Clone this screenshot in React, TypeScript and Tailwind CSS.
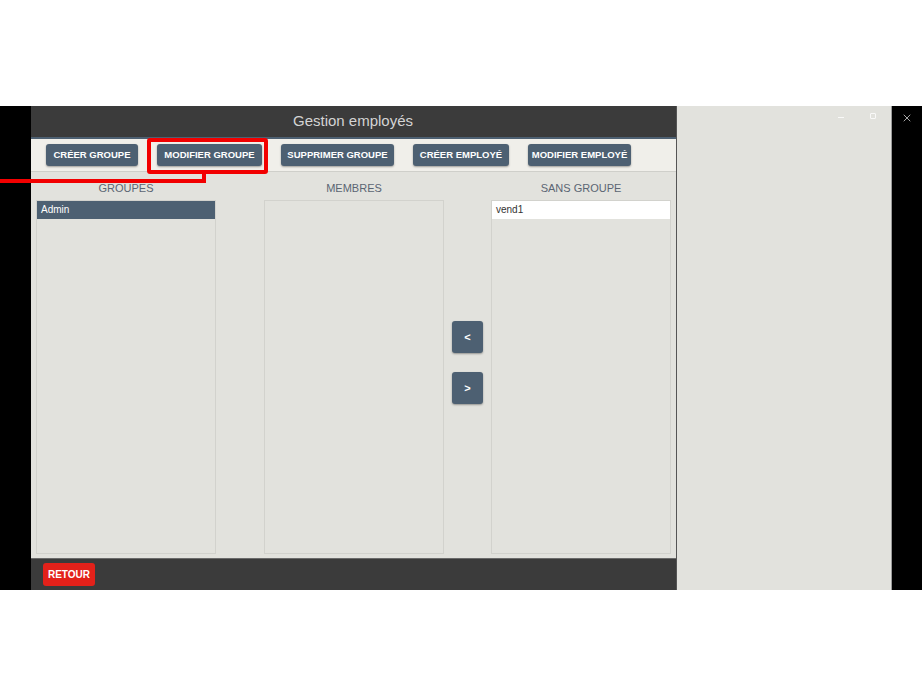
import { X } from "lucide-react";

const actions = [
  { label: "CRÉER GROUPE", w: "w-[92px]" },
  { label: "MODIFIER GROUPE", w: "w-[105px]" },
  { label: "SUPPRIMER GROUPE", w: "w-[113px]" },
  { label: "CRÉER EMPLOYÉ", w: "w-[96px]" },
  { label: "MODIFIER EMPLOYÉ", w: "w-[103px]" },
];

function ListBox({ title, children }: { title: string; children?: React.ReactNode }) {
  return (
    <div className="flex flex-col">
      <div className="h-[14px] mb-[5px] text-center text-[11px] leading-[14px] text-[#5b6573]">{title}</div>
      <div className="flex-1 border border-[#d2d2cd] bg-[#e2e2dd]">{children}</div>
    </div>
  );
}

function ArrowButton({ label }: { label: string }) {
  return (
    <button className="w-[31px] h-[32px] rounded-[3px] bg-[#4d6072] text-white text-[11px] font-bold shadow-[0_1px_2px_rgba(0,0,0,0.35)]">
      {label}
    </button>
  );
}

export default function App() {
  return (
    <div className="relative w-[922px] h-[696px] bg-white overflow-hidden font-['Liberation_Sans',Arial,sans-serif]">
      <div className="h-[106px]" />
      <div className="flex h-[484px]">
        <div className="w-[31px] bg-black" />

        {/* main window */}
        <div className="w-[645px] flex flex-col bg-[#e2e2dd]">
          <div className="h-[31px] bg-[#3b3b3b] flex items-center justify-center pr-[1px] text-[15px] text-[#d4d4d4]">
            Gestion employés
          </div>
          <div className="h-[2px] bg-[#4d6072]" />
          <div className="h-[33px] bg-[#f0efea] border-b border-[#cfcfca] flex items-center gap-[19px] pl-[15px]">
            {actions.map((a) => (
              <button
                key={a.label}
                className={`${a.w} h-[22px] rounded-[3px] bg-[#4d6072] text-white text-[9.5px] font-bold whitespace-nowrap shadow-[0_1px_2px_rgba(0,0,0,0.35)]`}
              >
                {a.label}
              </button>
            ))}
          </div>

          <div className="flex-1 grid grid-cols-[180px_48px_180px_47px_180px] pl-[5px] pt-[9px] pb-[4px]">
            <ListBox title="GROUPES">
              <div className="h-[18px] bg-[#4d6072] text-white text-[10px] leading-[18px] pl-[4px]">Admin</div>
            </ListBox>
            <div />
            <ListBox title="MEMBRES" />
            <div className="flex flex-col items-center pt-[140px] gap-[19px]">
              <ArrowButton label="<" />
              <ArrowButton label=">" />
            </div>
            <ListBox title="SANS GROUPE">
              <div className="h-[18px] bg-white text-[#333] text-[10px] leading-[18px] pl-[4px]">vend1</div>
            </ListBox>
          </div>

          <div className="h-[32px] bg-[#3b3b3b] border-t border-[#6a6a6a] flex items-center pl-[12px]">
            <button className="h-[23px] w-[52px] rounded-[3px] bg-[#e3211a] text-white text-[10px] font-bold">
              RETOUR
            </button>
          </div>
        </div>

        {/* side panel */}
        <div className="w-[216px] bg-[#e2e2dd] border-l border-[#555] border-r border-r-[#9a9a9a] relative">
          <div className="absolute left-[161px] top-[11px] w-[6px] h-[1px] bg-white/80" />
          <div className="absolute left-[193px] top-[7px] w-[6px] h-[6px] border border-white/80 rounded-[1px]" />
        </div>
        <div className="flex-1 bg-black flex justify-center pt-[6px]">
          <X className="w-[12px] h-[12px] text-[#dddddd]" strokeWidth={1.5} />
        </div>
      </div>

      {/* red annotation */}
      <div className="absolute left-[147px] top-[138px] w-[121px] h-[36px] border-4 border-[#f20000] rounded-[3px]" />
      <div className="absolute left-0 top-[179px] w-[206px] h-[4px] bg-[#f20000]" />
      <div className="absolute left-[202px] top-[172px] w-[4px] h-[11px] bg-[#f20000]" />
    </div>
  );
}
